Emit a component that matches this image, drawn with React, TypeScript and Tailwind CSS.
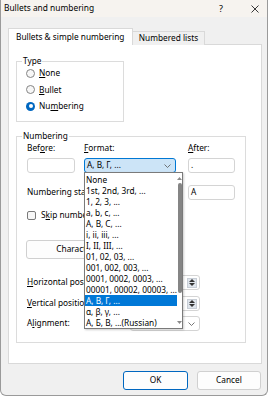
import React from "react";

const items = [
  "None",
  "1st, 2nd, 3rd, ...",
  "1, 2, 3, ...",
  "a, b, c, ...",
  "A, B, C, ...",
  "i, ii, iii, ...",
  "I, II, III, ...",
  "01, 02, 03, ...",
  "001, 002, 003, ...",
  "0001, 0002, 0003, ...",
  "00001, 00002, 00003, ...",
  "Α, Β, Γ, ...",
  "α, β, γ, ...",
  "А, Б, В, ...(Russian)",
];

function U({ children }: { children: React.ReactNode }) {
  return <span className="underline underline-offset-[1px]">{children}</span>;
}

function Radio({ checked }: { checked?: boolean }) {
  return checked ? (
    <span className="w-[9px] h-[9px] rounded-full bg-[#0067c0] flex items-center justify-center">
      <span className="w-[4px] h-[4px] rounded-full bg-white" />
    </span>
  ) : (
    <span className="w-[9px] h-[9px] rounded-full border border-[#858585] bg-[#f7f7f7]" />
  );
}

function Spin() {
  return (
    <div className="w-[70px] h-[15px] bg-white border border-[#d4d4d4] rounded-[3px] flex justify-end items-center pr-[2px]">
      <div className="w-[10px] h-[10px] bg-[#dfe5ec] border border-[#c8ced6] flex flex-col items-center justify-center gap-[1px]">
        <svg width="6" height="3" viewBox="0 0 6 3"><path d="M0 3 L3 0 L6 3 Z" fill="#333" /></svg>
        <svg width="6" height="3" viewBox="0 0 6 3"><path d="M0 0 L3 3 L6 0 Z" fill="#333" /></svg>
      </div>
    </div>
  );
}

export default function App() {
  return (
    <div
      className="relative w-[271px] h-[400px] bg-white overflow-hidden text-[8.3px] text-black"
      style={{ fontFamily: '"Noto Sans", "Open Sans", sans-serif' }}
    >
      <div className="w-[268px] h-[396px] bg-[#f0f0f0] border-l border-r border-b border-[#9a9a9a] rounded-b-[6px] flex flex-col">
        {/* title bar */}
        <div className="h-[17px] bg-[#f6f3ef] flex items-center pl-[3px] text-[8.4px]">
          <span>Bullets and numbering</span>
          <span className="ml-auto mr-[28px] text-[9px]">?</span>
          <svg width="8" height="8" viewBox="0 0 8 8" className="mr-[8px]">
            <path d="M0.5 0.5 L7.5 7.5 M7.5 0.5 L0.5 7.5" stroke="#222" strokeWidth="0.9" />
          </svg>
        </div>

        {/* tabs */}
        <div className="mt-[11px] ml-[7px] flex items-end h-[17px] relative z-10">
          <div className="w-[125px] h-[17px] bg-white border border-[#d9d9d9] border-b-0 flex items-center pl-[7px] pt-[1px]">
            Bullets &amp; simple numbering
          </div>
          <div className="w-[72px] h-[14px] bg-[#f0f0f0] border border-[#d9d9d9] border-l-0 border-b-0 flex items-center justify-center">
            Numbered lists
          </div>
        </div>

        {/* panel */}
        <div className="ml-[7px] w-[254px] h-[320px] bg-white border border-[#d9d9d9] -mt-px flex flex-col pl-[7px]">
          <fieldset className="mt-[11px] w-[108px] h-[66px] border border-[#dcdcdc] px-[5px]">
            <legend className="px-[1px] leading-[10px]">Type</legend>
            <div className="-mt-px pl-[4px] flex flex-col">
              <div className="h-[16.5px] flex items-center gap-[4px]">
                <Radio />
                <span><U>N</U>one</span>
              </div>
              <div className="h-[16.5px] flex items-center gap-[4px]">
                <Radio />
                <span><U>B</U>ullet</span>
              </div>
              <div className="h-[16.5px] flex items-center gap-[4px]">
                <Radio checked />
                <span>Nu<U>m</U>bering</span>
              </div>
            </div>
          </fieldset>

          <fieldset className="mt-[9px] w-[230px] h-[212px] border border-[#dcdcdc] px-[5px]">
            <legend className="px-[1px] leading-[10px]">Numbering</legend>
            <div className="pl-[5px] flex flex-col">
              <div className="mt-[1px] h-[12px] flex items-center">
                <span className="w-[57px]">Bef<U>o</U>re:</span>
                <span className="w-[104px]"><U>F</U>ormat:</span>
                <span><U>A</U>fter:</span>
              </div>
              <div className="mt-[4px] h-[15px] flex">
                <div className="w-[48px] h-[15px] bg-white border border-[#d4d4d4] rounded-[3px]" />
                <div className="ml-[9px] w-[92px] h-[15px] bg-[#cce4f7] border border-[#0078d4] rounded-[3px] flex items-center pl-[2px]">
                  <span>Α, Β, Γ, ...</span>
                  <svg width="7" height="4" viewBox="0 0 7 4" className="ml-auto mr-[4px]">
                    <path d="M0.5 0.5 L3.5 3.5 L6.5 0.5" stroke="#555" strokeWidth="0.8" fill="none" />
                  </svg>
                </div>
                <div className="ml-[12px] w-[47px] h-[15px] bg-white border border-[#d4d4d4] rounded-[3px] flex items-center pl-[2px]">
                  .
                </div>
              </div>
              <div className="mt-[12px] h-[15px] flex items-center">
                <span className="w-[161px]">Numbering start at:</span>
                <div className="w-[47px] h-[15px] bg-white border border-[#d4d4d4] rounded-[3px] flex items-center pl-[2px]">
                  A
                </div>
              </div>
              <div className="mt-[9px] h-[12px] flex items-center gap-[5px]">
                <span className="w-[9px] h-[9px] rounded-[2px] border border-[#7a7a7a] bg-[#f7f7f7]" />
                <span>S<U>k</U>ip numbering</span>
              </div>
              <div className="mt-[19px] -ml-px w-[104px] h-[19px] bg-[#fdfdfd] border border-[#d0d0d0] rounded-[3px] flex items-center justify-center">
                Character...
              </div>
              <div className="mt-[16px] h-[15px] flex items-center">
                <span className="w-[103px]"><U>H</U>orizontal position:</span>
                <Spin />
              </div>
              <div className="mt-[6px] h-[15px] flex items-center">
                <span className="w-[103px]"><U>V</U>ertical position:</span>
                <Spin />
              </div>
              <div className="mt-[5px] h-[15px] flex items-center">
                <span className="w-[103px]">A<U>l</U>ignment:</span>
                <div className="w-[70px] h-[15px] bg-white border border-[#d4d4d4] rounded-[3px] flex items-center pl-[2px]">
                  <span>Left</span>
                  <svg width="7" height="4" viewBox="0 0 7 4" className="ml-auto mr-[4px]">
                    <path d="M0.5 0.5 L3.5 3.5 L6.5 0.5" stroke="#555" strokeWidth="0.8" fill="none" />
                  </svg>
                </div>
              </div>
            </div>
          </fieldset>
        </div>

        {/* buttons */}
        <div className="mt-[7px] flex justify-end gap-[9px] pr-[6px]">
          <div className="w-[65px] h-[19px] bg-[#fdfdfd] border border-[#0067c0] rounded-[3px] flex items-center justify-center">
            OK
          </div>
          <div className="w-[64px] h-[19px] bg-[#fdfdfd] border border-[#d0d0d0] rounded-[3px] flex items-center justify-center">
            Cancel
          </div>
        </div>
      </div>

      {/* dropdown list overlay */}
      <div className="absolute left-[84px] top-[172px] w-[99px] h-[157px] bg-white border border-[#7a7a7a] flex shadow-[1px_1px_2px_rgba(0,0,0,0.2)]">
        <div className="flex-1 pt-[1px] flex flex-col">
          {items.map((t, i) => (
            <div
              key={i}
              className={
                "h-[11px] leading-[11px] pl-[1px] whitespace-nowrap overflow-hidden " +
                (i === 11 ? "bg-[#0078d7] text-white" : "")
              }
            >
              {t}
            </div>
          ))}
        </div>
        <div className="w-[9px] bg-white flex flex-col items-center pt-[4px] pb-[4px]">
          <svg width="5" height="3" viewBox="0 0 5 3"><path d="M0 3 L2.5 0 L5 3 Z" fill="#8a8a8a" /></svg>
          <div className="mt-[3px] w-[4px] h-[110px] rounded-full bg-[#858585]" />
          <svg width="5" height="3" viewBox="0 0 5 3" className="mt-auto"><path d="M0 0 L2.5 3 L5 0 Z" fill="#8a8a8a" /></svg>
        </div>
      </div>
    </div>
  );
}
